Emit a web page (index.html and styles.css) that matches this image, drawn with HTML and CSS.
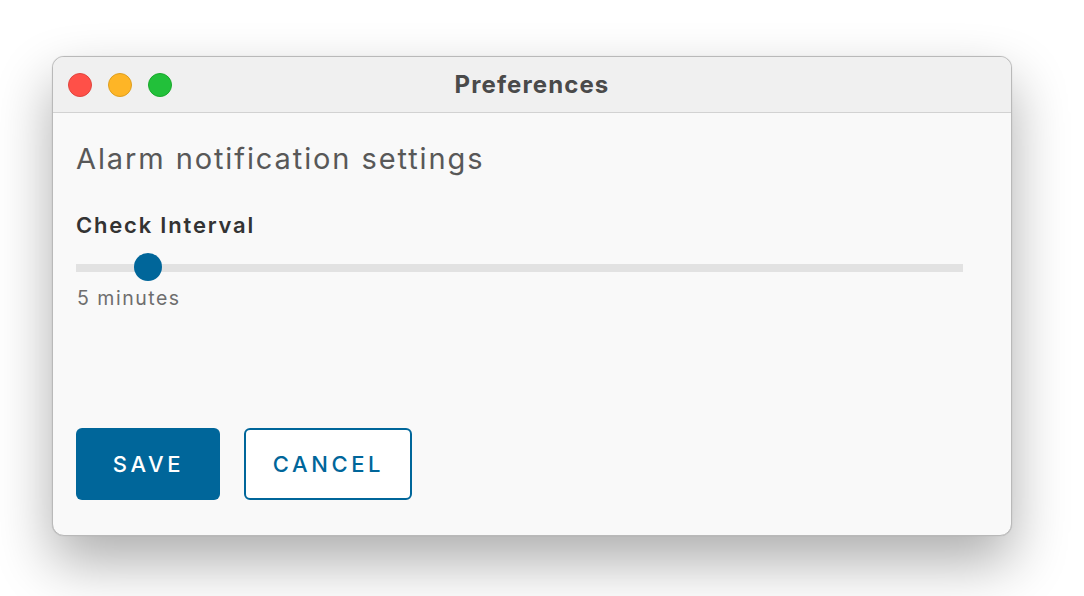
FILE: index.html
```html
<!DOCTYPE html>
<html>
<head>
<meta charset="utf-8">
<link rel="stylesheet" href="styles.css">
</head>
<body>
<div class="window">
  <div class="titlebar">
    <div class="lights">
      <span class="light red"></span>
      <span class="light yellow"></span>
      <span class="light green"></span>
    </div>
    <div class="title">Preferences</div>
  </div>
  <div class="content">
    <h1 class="heading">Alarm notification settings</h1>
    <div class="label">Check Interval</div>
    <div class="slider">
      <div class="track"></div>
      <div class="thumb" style="left: 72px"></div>
    </div>
    <div class="value">5 minutes</div>
    <div class="actions">
      <button class="btn primary">SAVE</button>
      <button class="btn outline">CANCEL</button>
    </div>
  </div>
</div>
</body>
</html>
```
FILE: styles.css
```css
html, body {
  margin: 0;
  padding: 0;
  background: #ffffff;
}
body {
  box-sizing: border-box;
  min-height: 596px;
  padding: 56px 0 0 52px;
  font-family: "Inter", sans-serif;
}
.window {
  width: 958px;
  height: 478px;
  border: 1px solid #b9b9b9;
  border-radius: 12px;
  overflow: hidden;
  background: #f9f9f9;
  box-shadow: 0 26px 56px rgba(0,0,0,0.32), 0 0 1px rgba(0,0,0,0.2);
  display: flex;
  flex-direction: column;
}
.titlebar {
  height: 55px;
  background: #f0f0f0;
  border-bottom: 1px solid #d2d2d2;
  display: flex;
  align-items: center;
  position: relative;
}
.lights {
  display: flex;
  gap: 16px;
  padding-left: 15px;
}
.light {
  width: 22px;
  height: 22px;
  border-radius: 50%;
  display: block;
}
.red { background: #ff5048; border: 1px solid #e0443e; }
.yellow { background: #feb526; border: 1px solid #de9f1f; }
.green { background: #22c03a; border: 1px solid #19a92b; }
.title {
  position: absolute;
  left: 0;
  right: 0;
  top: 0;
  bottom: 0;
  display: flex;
  align-items: center;
  justify-content: center;
  font-weight: 700;
  font-size: 24px;
  letter-spacing: 1.1px;
  color: #4a4a4a;
  pointer-events: none;
}
.content {
  flex: 1;
  padding: 25px 48px 35px 23px;
  display: flex;
  flex-direction: column;
}
.heading {
  margin: 0;
  font-weight: 400;
  font-size: 29px;
  color: #585858;
  line-height: 42px;
  letter-spacing: 1.9px;
}
.label {
  margin-top: 30px;
  font-weight: 600;
  font-size: 22px;
  color: #333333;
  line-height: 30px;
  letter-spacing: 1.8px;
}
.slider {
  position: relative;
  height: 30px;
  margin-top: 12px;
}
.track {
  position: absolute;
  left: 0;
  right: 0;
  top: 12px;
  height: 8px;
  background: #e2e2e2;
}
.thumb {
  position: absolute;
  top: 1px;
  width: 28px;
  height: 28px;
  border-radius: 50%;
  background: #00669a;
  transform: translateX(-50%);
}
.value {
  margin-top: 4px;
  padding-left: 1px;
  font-size: 19.5px;
  color: #6e6e6e;
  line-height: 24px;
  letter-spacing: 1.5px;
}
.actions {
  margin-top: auto;
  display: flex;
  gap: 24px;
}
.btn {
  height: 72px;
  border-radius: 6px;
  font-family: "Inter", sans-serif;
  font-size: 22px;
  font-weight: 500;
  letter-spacing: 3.6px;
  padding: 0 0 0 1px;
  cursor: pointer;
}
.primary {
  width: 144px;
  background: #00669a;
  color: #ffffff;
  border: none;
}
.outline {
  width: 168px;
  background: #ffffff;
  color: #00669a;
  border: 2px solid #00669a;
}
```
